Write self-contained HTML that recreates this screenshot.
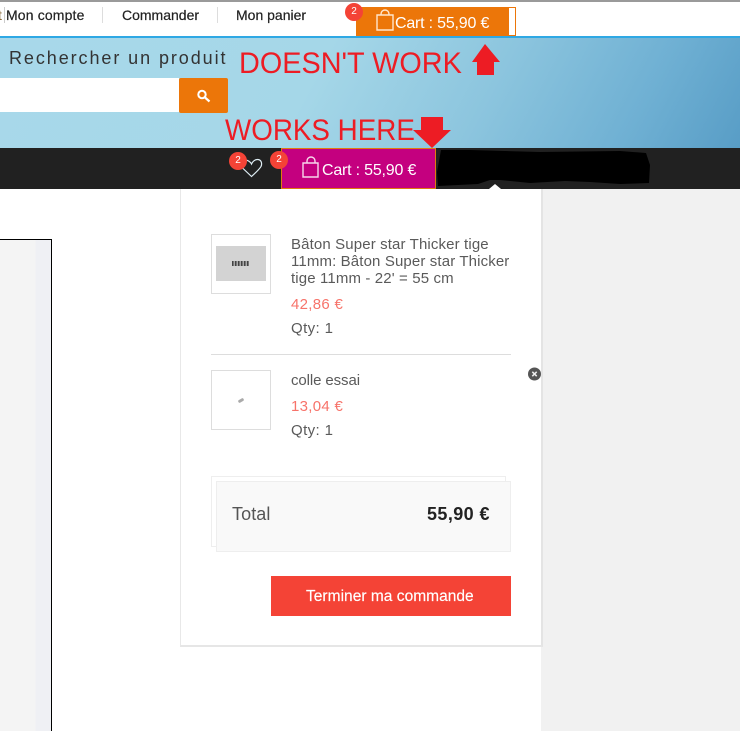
<!DOCTYPE html>
<html lang="fr"><head><meta charset="utf-8"><title>Cart</title>
<style>
html,body{margin:0;padding:0;background:#fff}
#p{position:relative;width:740px;height:731px;overflow:hidden;background:#fff;font-family:"Liberation Sans",sans-serif}
#p div,#p span.t{position:absolute;box-sizing:border-box}
.t{white-space:nowrap;line-height:1;position:absolute}
.nav{font-size:14px;color:#222;top:8px;font-weight:400;-webkit-text-stroke:.2px #222}
.red{color:#ed1c24;font-size:30px;line-height:30px;transform-origin:0 50%}
.body{font-size:15px;color:#5a5a5a;letter-spacing:.13px}
.pr{font-size:15px;color:#f7736a;letter-spacing:.3px}
.bad{width:18px;height:18px;border-radius:50%;background:#f44336;color:#fff;font-size:10px;line-height:18px;text-align:center}
svg{position:absolute;left:0;top:0}
</style></head><body><div id="p">

<div style="left:0;top:0;width:740px;height:2px;background:#9a9a9a"></div>
<div style="left:0;top:36px;width:740px;height:2px;background:#2ea8e4"></div>
<span class="t" style="left:-2px;top:8px;font-size:14px;color:#8a6a3a">t</span>
<div style="left:4px;top:7px;width:1px;height:16px;background:#ccc"></div>
<span class="t nav" style="left:6px;letter-spacing:.15px">Mon compte</span>
<div style="left:102px;top:7px;width:1px;height:16px;background:#ddd"></div>
<span class="t nav" style="left:122px">Commander</span>
<div style="left:217px;top:7px;width:1px;height:16px;background:#ddd"></div>
<span class="t nav" style="left:236px">Mon panier</span>

<div style="left:356px;top:7px;width:160px;height:29px;background:#fff;border:1px solid #ec7609;border-left:0"></div>
<div style="left:356px;top:7px;width:153px;height:29px;background:#ec7609"></div>
<span class="t" style="left:395px;top:16px;font-size:16px;color:#fff;letter-spacing:-.2px">Cart : 55,90 €</span>
<div class="bad" style="left:345px;top:3px">2</div>

<div style="left:0;top:38px;width:740px;height:110px;background:linear-gradient(118deg,#a8d8ea 0%,#a5d7e8 42%,#8cc5de 65%,#6fb0d3 85%,#589dc6 100%)"></div>
<span class="t" style="left:9px;top:49px;font-size:18px;color:#333;letter-spacing:1.92px">Rechercher un produit</span>
<div style="left:0;top:78px;width:179px;height:34px;background:#fff"></div>
<div style="left:179px;top:78px;width:49px;height:35px;background:#ec7609;border-radius:2px"></div>
<span class="t red" style="left:239px;top:49px;transform:scaleX(.961)">DOESN'T WORK</span>
<span class="t red" style="left:225px;top:116px;transform:scaleX(.926)">WORKS HERE</span>

<div style="left:0;top:148px;width:740px;height:41px;background:#212121"></div>
<div style="left:281px;top:148px;width:155px;height:41px;background:#c4007f;border:1px solid #e07a10"></div>
<span class="t" style="left:322px;top:163px;font-size:16px;color:#fff;letter-spacing:-.2px">Cart : 55,90 €</span>

<div style="left:541px;top:189px;width:199px;height:542px;background:#f1f1f1"></div>
<div style="left:0;top:239px;width:52px;height:492px;background:linear-gradient(90deg,#f4f4f4 0,#f4f4f4 35px,#eff0f4 36px);border-top:1px solid #000;border-right:1px solid #000"></div>

<div style="left:180px;top:189px;width:363px;height:458px;background:#fff;border-left:1px solid #e8e8e8;border-right:2px solid #e4e4e4;border-bottom:2px solid #e6e6e6"></div>

<div style="left:211px;top:234px;width:60px;height:60px;border:1px solid #ddd;background:#fff"></div>
<div style="left:216px;top:246px;width:50px;height:35px;background:#d3d3d3"></div>
<div style="left:232px;top:261px;width:17px;height:5px;background:repeating-linear-gradient(90deg,#444 0,#444 1.5px,#aaa 1.5px,#aaa 3px)"></div>
<span class="t body" style="left:291px;top:237px">Bâton Super star Thicker tige</span>
<span class="t body" style="left:291px;top:254px">11mm: Bâton Super star Thicker</span>
<span class="t body" style="left:291px;top:271px">tige 11mm - 22' = 55 cm</span>
<span class="t pr" style="left:291px;top:297px">42,86 €</span>
<span class="t body" style="left:291px;top:321px;letter-spacing:.4px">Qty: 1</span>
<div style="left:211px;top:354px;width:300px;height:1px;background:#ddd"></div>

<div style="left:211px;top:370px;width:60px;height:60px;border:1px solid #ddd;background:#fff"></div>
<div style="left:238px;top:399px;width:6px;height:3px;background:#aaa;border-radius:2px;transform:rotate(-30deg)"></div>
<span class="t body" style="left:291px;top:373px;letter-spacing:-.1px">colle essai</span>
<span class="t pr" style="left:291px;top:399px">13,04 €</span>
<span class="t body" style="left:291px;top:423px;letter-spacing:.4px">Qty: 1</span>

<div style="left:211px;top:476px;width:295px;height:71px;border:1px solid #eee;background:#fff"></div>
<div style="left:216px;top:481px;width:295px;height:71px;border:1px solid #eee;background:#f9f9f9"></div>
<span class="t" style="left:232px;top:505px;font-size:18px;color:#555;letter-spacing:.1px">Total</span>
<span class="t" style="left:427px;top:505px;font-size:18px;font-weight:700;color:#222;letter-spacing:.4px">55,90 €</span>

<div style="left:271px;top:576px;width:240px;height:40px;background:#f44336"></div>
<span class="t" style="left:306px;top:589px;font-size:15.5px;color:#fff;letter-spacing:.03px;-webkit-text-stroke:.15px #fff">Terminer ma commande</span>

<svg width="740" height="731" viewBox="0 0 740 731">
  <!-- top bag -->
  <path d="M377 15h16v15h-16zM381 15v-1a4 4 0 0 1 8 0v1" fill="none" stroke="#ffe6cc" stroke-width="1.4"/>
  <!-- search icon -->
  <circle cx="202" cy="94.500" r="3.700" fill="none" stroke="#fff" stroke-width="2"/>
  <path d="M205 97.500l4.500 4" stroke="#fff" stroke-width="2.200" fill="none"/>
  <!-- up arrow -->
  <path d="M485 44L500 62H494V75H477V62H472Z" fill="#ed1c24"/>
  <!-- down arrow -->
  <path d="M421 117H443V130H451L432 148L413 130H421Z" fill="#ed1c24"/>
  <!-- heart -->
  <path d="M251.500 176.500L241.500 167C239 164 241 160 245 160C248 160 250.500 162 251.500 164C252.500 161.500 255 159.500 257.500 159.500C261 159.500 262.500 163 261 166.500C259 170 254 174 251.500 176.500Z" fill="none" stroke="#dfeef5" stroke-width="1.200"/>
  <!-- magenta bag -->
  <path d="M303 163h15v14h-15zM307 163v-2a4 4 0 0 1 8 0v2" fill="none" stroke="#f7d6ea" stroke-width="1.400"/>
  <!-- scribble -->
  <path d="M441 150L470 150L540 152L620 151L646 153L650 165L649 183L620 184L590 182L565 181L530 183L500 180L490 180L478 184L438 186L437 172Z" fill="#000"/>
  <!-- notch -->
  <path d="M489 189L495 184L501 189Z" fill="#fff"/>
  <!-- close -->
  <circle cx="534.500" cy="374" r="6.500" fill="#555"/>
  <path d="M532.300 371.800l4.400 4.400M536.700 371.800l-4.400 4.400" stroke="#eee" stroke-width="1.500"/>
</svg>
<div class="bad" style="left:229px;top:152px">2</div>
<div class="bad" style="left:270px;top:151px">2</div>
</div></body></html>
